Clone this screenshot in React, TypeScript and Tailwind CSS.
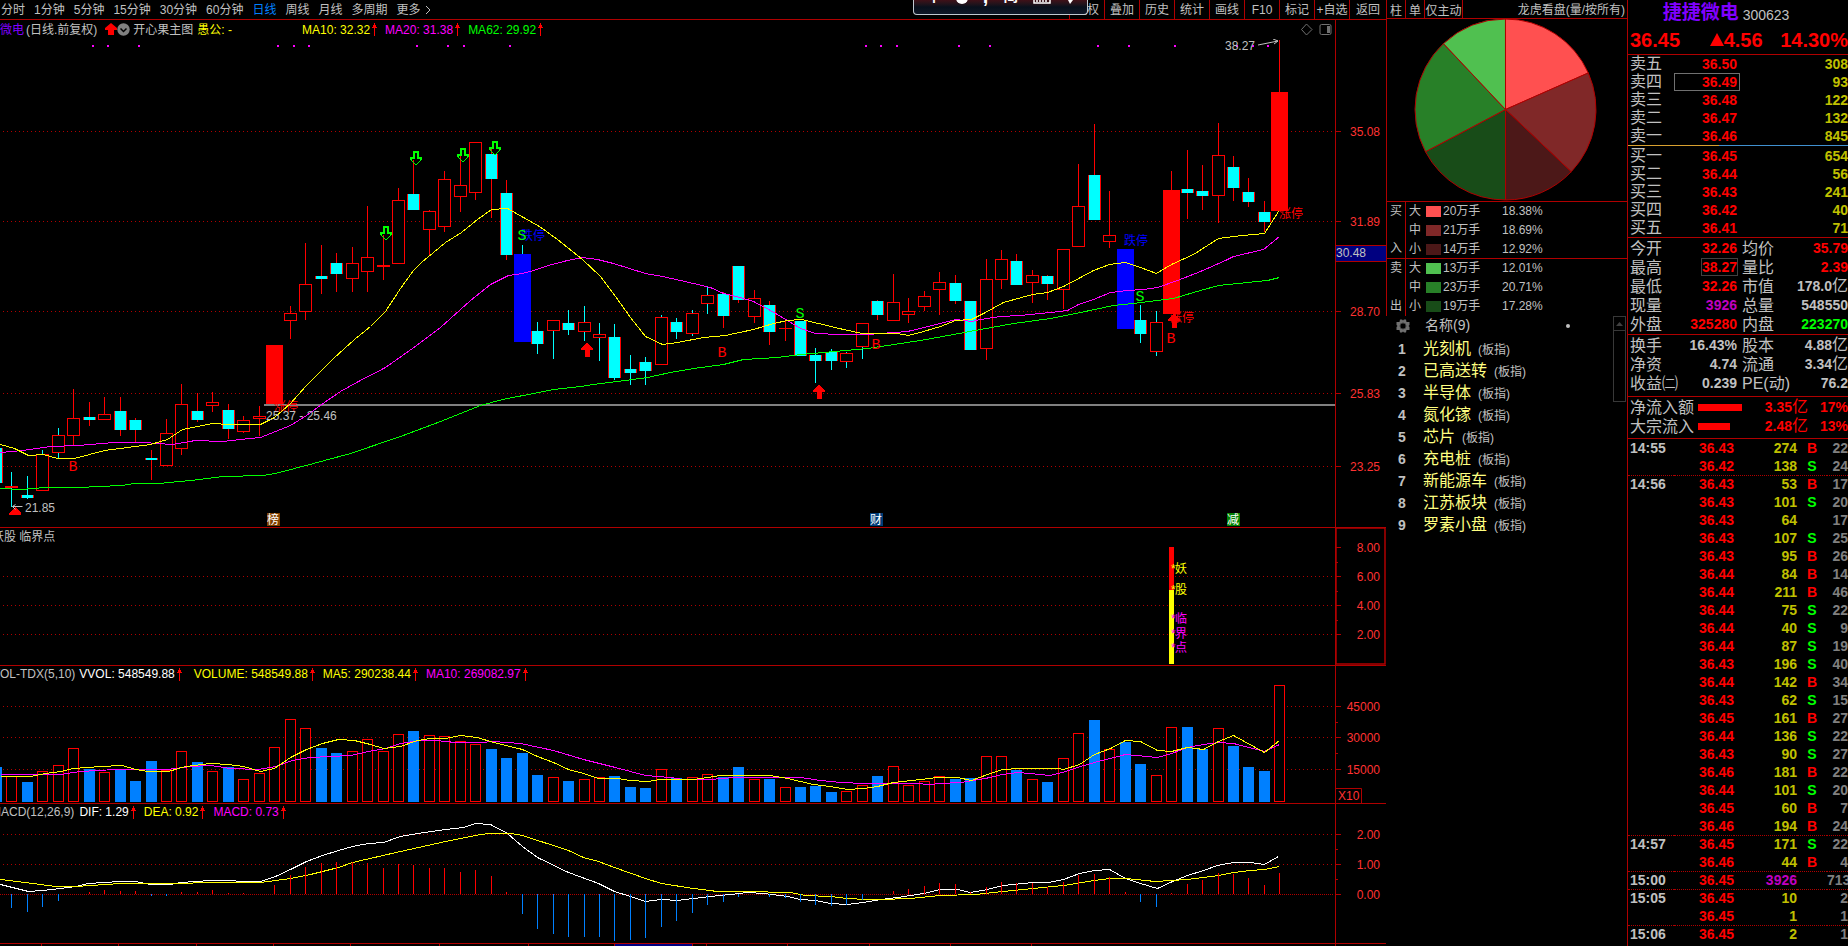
import React from "react";

type Kind = "r" | "c" | "R" | "B" | "d";
type Candle = [number, Kind, number, number, number, number, boolean?];

const cx = (i: number) => Math.round(11.4 + 15.463 * i);

/* index, kind, body top, body bottom, high, low, cyan wick */
const candles: Candle[] = [
  [-1, "c", 448, 483, 448, 483], [0, "d", 486, 488, 472, 507, true], [1, "c", 495, 498, 476, 499, true],
  [2, "r", 454, 491, 450, 491, true], [3, "r", 435, 453, 428, 458, true], [4, "r", 418, 436, 389, 446],
  [5, "c", 417, 420, 402, 426], [6, "r", 414, 420, 397, 420], [7, "c", 411, 430, 397, 436],
  [8, "c", 420, 430, 418, 442], [9, "c", 458, 460, 450, 480], [10, "r", 433, 466, 419, 466],
  [11, "r", 404, 449, 384, 455], [12, "c", 411, 420, 393, 422], [13, "r", 402, 406, 392, 412],
  [14, "c", 410, 429, 404, 439], [15, "r", 420, 432, 416, 433], [16, "r", 416, 419, 406, 436],
  [17, "R", 345, 404, 345, 404], [18, "r", 313, 321, 306, 339], [19, "r", 284, 312, 243, 320],
  [20, "c", 276, 279, 245, 294], [21, "c", 263, 274, 253, 292], [22, "r", 263, 279, 247, 292],
  [23, "r", 257, 272, 206, 292], [24, "d", 265, 267, 235, 280], [25, "r", 200, 264, 188, 264],
  [26, "c", 194, 210, 160, 210], [27, "r", 211, 230, 210, 256], [28, "r", 179, 227, 171, 232],
  [29, "r", 185, 197, 156, 212], [30, "r", 142, 193, 142, 200], [31, "c", 154, 179, 149, 218],
  [32, "c", 193, 255, 180, 260], [33, "B", 254, 342, 245, 342, true], [34, "c", 331, 344, 322, 354, true],
  [35, "r", 320, 331, 320, 359, true], [36, "c", 323, 330, 310, 335, true], [37, "r", 322, 332, 306, 341, true],
  [38, "r", 334, 338, 323, 361, true], [39, "c", 337, 378, 324, 380, true], [40, "c", 369, 373, 355, 385, true],
  [41, "c", 362, 371, 357, 385, true], [42, "r", 317, 365, 315, 365, true], [43, "c", 322, 332, 318, 339, true],
  [44, "r", 313, 334, 310, 336, true], [45, "r", 295, 304, 287, 314, true], [46, "c", 294, 316, 292, 328],
  [47, "c", 266, 300, 266, 303], [48, "r", 298, 317, 290, 323], [49, "c", 305, 332, 301, 345],
  [50, "d", 328, 329, 320, 341], [51, "c", 321, 356, 321, 356], [52, "c", 355, 361, 348, 383, true],
  [53, "c", 352, 361, 349, 370, true], [54, "r", 353, 362, 352, 368, true], [55, "r", 323, 347, 323, 359, true],
  [56, "c", 301, 315, 300, 320], [57, "r", 302, 321, 274, 321], [58, "r", 311, 315, 298, 323],
  [59, "r", 296, 307, 291, 311], [60, "r", 282, 290, 272, 315], [61, "c", 283, 301, 275, 304],
  [62, "c", 301, 350, 301, 350], [63, "r", 279, 349, 259, 360], [64, "r", 259, 280, 250, 289],
  [65, "c", 261, 285, 254, 285], [66, "r", 275, 283, 270, 303], [67, "c", 276, 284, 275, 300],
  [68, "r", 249, 290, 249, 309], [69, "r", 206, 247, 164, 247], [70, "c", 175, 220, 124, 220],
  [71, "r", 235, 242, 191, 248], [72, "B", 249, 329, 249, 329], [73, "c", 320, 334, 305, 343, true],
  [74, "r", 322, 352, 311, 356, true], [75, "R", 190, 314, 171, 314], [76, "c", 189, 193, 150, 219],
  [77, "c", 191, 196, 165, 210], [78, "r", 155, 196, 123, 223], [79, "c", 167, 188, 156, 201],
  [80, "c", 192, 202, 178, 207], [81, "c", 212, 222, 201, 232], [82, "R", 92, 211, 40, 211],
];

/* bar tops from index -1; the letter marks rising (r) or falling (b) */
const volumes =
  "b767 r776 b782 r771 r765 r748 b769 r772 b769 b781 b761 r770 r751 b762 r771 b767 r779 r773 r747 r719 r728 b748 b753 r751 r739 r751 r734 b731 r735 r736 r741 r744 b749 b758 b753 b775 r777 b781 r779 r777 b776 b787 b788 r769 b778 r777 r774 b777 b767 r779 b779 r787 b787 b786 b792 r791 r785 b776 r766 r785 r781 r776 b779 b778 r756 r756 b770 r779 b782 r758 r733 b720 r749 b742 b764 r775 r727 b727 b749 r728 b746 b767 b771 r685".split(" ");

/* bar ends from index 0, zero line at 894 */
const macd = [
  908, 912, 907, 901, 894, 892, 890, 891, 891, 896, 896, 892, 892, 890, 893, 893, 894, 885, 875, 867, 863, 862, 862,
  863, 868, 864, 865, 868, 868, 872, 870, 876, 892, 914, 929, 934, 937, 937, 937, 941, 940, 938, 927, 921, 913, 905,
  902, 897, 894, 897, 898, 902, 905, 906, 905, 900, 894, 891, 889, 886, 883, 884, 892, 887, 882, 883, 883, 887, 882,
  875, 874, 877, 892, 902, 907, 893, 884, 880, 873, 874, 878, 885, 873,
];

const ma10 = "0,444 14,448 28,455 43,454 57,458 74,458 104,450 150,444 167,439 182,429 212,423 228,424 260,424 274,417 290,403 306,385 333,358 354,339 370,326 385,311 400,288 413,270 421,262 445,242 461,232 477,219 491,209 507,208 523,217 539,226 557,239 582,259 600,276 615,296 630,317 645,336 662,344 677,342 703,337 725,335 753,329 773,323 787,320 801,319 818,323 843,329 862,333 897,333 908,335 923,331 940,326 955,320 971,319 983,313 1003,302 1032,294 1047,292 1063,286 1080,277 1093,270 1109,264 1125,262 1140,267 1156,273 1171,264 1193,254 1207,245 1218,238 1242,235 1264,233 1278,211";
const ma20 = "0,452 22,450 50,446 78,445 114,442 143,442 172,444 195,440 222,441 240,439 260,437 275,431 290,425 306,415 324,402 340,391 358,381 385,367 412,348 440,327 470,300 490,284 508,275 522,273 533,270 548,265 567,260 582,257 597,259 613,263 645,273 662,276 680,280 693,283 710,287 723,293 740,297 753,301 770,310 787,320 800,328 815,333 840,334 867,334 880,333 907,331 940,323 955,319 971,321 980,319 1000,316 1020,315 1050,312 1067,310 1078,304 1093,299 1110,292 1127,290 1143,289 1157,287 1177,280 1200,271 1225,260 1233,256 1263,249 1279,236";
const ma62 = "0,488 20,489 45,487 80,487 97,486 122,485 133,483 158,483 190,480 223,476 262,475 275,473 313,463 350,453 400,436 440,421 480,405 502,399 533,393 553,389 580,386 600,383 617,381 647,377 670,372 693,368 723,364 743,359 777,357 800,354 823,352 867,348 900,343 920,340 953,334 980,329 1013,323 1050,318 1080,312 1113,305 1133,303 1157,300 1173,298 1193,292 1218,285 1247,282 1267,280 1279,277";
const vol5 = "0,776 30,776 45,773 60,771 73,768 100,766 122,765 135,769 148,771 168,771 185,766 210,763 228,764 243,766 260,771 274,768 290,757 306,749 322,743 338,739 354,740 370,744 383,748 400,746 417,740 430,738 445,738 460,735 477,737 493,742 522,749 537,756 553,762 568,769 583,773 598,778 617,778 630,780 647,781 660,779 693,779 707,777 720,775 770,775 787,778 800,781 813,784 830,786 847,789 863,788 877,786 893,782 920,779 937,777 957,777 971,780 987,774 1002,769 1020,768 1057,768 1063,769 1079,764 1094,754 1110,748 1125,740 1140,741 1157,750 1171,751 1187,747 1203,749 1218,741 1233,735 1264,752 1279,740";
const vol10 = "0,774 60,774 80,771 115,769 150,769 167,769 190,766 210,765 230,768 258,769 275,766 292,760 310,757 350,755 368,751 385,748 400,743 420,740 435,740 455,742 480,742 493,741 520,743 553,750 583,759 615,767 645,775 670,777 683,779 710,779 733,777 800,777 820,780 840,782 865,783 915,783 930,784 940,783 960,782 985,778 1002,774 1018,772 1050,775 1065,771 1080,766 1094,762 1125,754 1157,757 1171,753 1187,747 1203,744 1218,742 1233,743 1264,751 1279,744";
const dif = "0,884 28,891 42,890 60,888 75,886 88,883 120,881 135,881 150,884 170,884 180,882 210,880 260,881 275,876 290,869 306,861 322,855 338,850 352,846 368,843 383,842 400,836 417,833 445,829 463,827 475,823 490,824 507,833 522,846 537,857 568,872 598,883 614,891 630,896 645,901 661,899 677,900 693,898 710,896 730,894 747,892 763,893 787,896 800,899 815,900 830,903 847,904 863,902 880,899 897,897 923,893 940,889 957,889 970,892 987,889 1002,885 1033,882 1048,882 1063,879 1079,873 1094,870 1109,869 1125,878 1140,883 1157,888 1172,881 1187,875 1203,870 1217,865 1233,862 1250,862 1264,864 1278,856";
const dea = "0,879 25,882 40,884 55,886 75,886 90,885 120,883 170,883 215,882 260,882 290,878 310,874 338,867 352,862 400,851 445,841 480,834 490,833 510,833 522,835 568,850 583,857 598,861 614,867 645,878 661,883 693,888 717,891 745,891 790,892 805,895 830,896 847,898 865,899 880,899 910,898 940,895 975,894 1002,891 1033,888 1063,885 1094,880 1109,878 1125,878 1155,881 1187,879 1218,875 1233,872 1250,870 1264,869 1279,866";

const limitDots = [93, 108, 139, 278, 294, 309, 417, 448, 464, 510, 866, 881, 897, 959, 990, 1098, 1129, 1175, 1237, 1253, 1268];

function Grid({ ys }: { ys: number[] }) {
  return (
    <g stroke="#b00000" strokeDasharray="1 3" shapeRendering="crispEdges">
      {ys.map((y) => (
        <line key={y} x1="3" x2="1334" y1={y + 0.5} y2={y + 0.5} />
      ))}
    </g>
  );
}

function Line({ pts, color }: { pts: string; color: string }) {
  return <polyline points={pts} fill="none" stroke={color} strokeWidth="1" shapeRendering="crispEdges" transform="translate(0.5 0.5)" />;
}

function CandleMark({ c }: { c: Candle }) {
  const [i, kind, top, bottom, high, low, cyanWick] = c;
  const x = cx(i);
  const h = bottom - top;
  const wick = cyanWick ? "#00ffff" : "#ff0000";
  const wide = kind === "R" || kind === "B";
  return (
    <g>
      <rect x={x} y={high} width="1" height={low - high} fill={wick} />
      {wide && <rect x={x - 8} y={top} width="17" height={h} fill={kind === "R" ? "#ff0000" : "#0000ff"} />}
      {kind === "d" && <rect x={x - 6} y={top} width="13" height={h} fill="#ff0000" />}
      {kind === "r" && <rect x={x - 5.5} y={top + 0.5} width="12" height={h - 1} fill="#000" stroke="#ff0000" />}
      {kind === "c" && <rect x={x - 6} y={top} width="13" height={h} fill="#ff0000" />}
      {kind === "c" && <rect x={x - 5} y={top} width="11" height={h} fill="#00ffff" />}
    </g>
  );
}

function Arrow() {
  return (
    <svg width="5" height="13" viewBox="0 0 5 13" className="ml-0.5 shrink-0" shapeRendering="crispEdges" aria-hidden="true">
      <path d="M2 0h1v13h-1z M1 2h3v2h1v1H0V4h1z" fill="#ff0000" />
    </svg>
  );
}

const downArrow = (x: number, y: number) => (
  <path key={x} d={`M${x - 2} ${y}h4v6h3v2l-5 5l-5 -5v-2h3z`} fill="none" stroke="#00ff00" strokeWidth="1.4" />
);
const upArrow = (x: number, y: number) => (
  <path key={x} d={`M${x} ${y}l6 5v2h-3v7h-5v-7h-4v-2z`} fill="#ff0000" />
);

function Axis({ y, height, labels, minor, children }: { y: number; height: number; labels: [number, string][]; minor?: number[]; children?: React.ReactNode }) {
  return (
    <svg width="51" height={height} viewBox={`1335 ${y} 51 ${height}`} className="shrink-0 text-xs" aria-hidden="true">
      <g fill="#b00000">
        <rect x="1335" y={y} width="1" height={height} />
        {labels.map(([ty]) => <rect key={ty} x="1336" y={ty} width="5" height="1" />)}
        {minor?.map((ty) => <rect key={ty} x="1336" y={ty} width="2" height="1" />)}
      </g>
      {labels.map(([ty, t]) => (
        <text key={t} x="1380" y={ty + 5} textAnchor="end" fill="#ff3232">{t}</text>
      ))}
      {children}
    </svg>
  );
}

const periods = ["分时", "1分钟", "5分钟", "15分钟", "30分钟", "60分钟", "日线", "周线", "月线", "多周期"];
const tools = ["复权", "叠加", "历史", "统计", "画线", "F10", "标记", "+自选", "返回"];

function Toolbar() {
  return (
    <header className="flex h-5 shrink-0 items-center justify-between border-b border-[#b00000]">
      <nav className="flex shrink-0 gap-[9px] pl-px" aria-label="周期">
        {periods.map((p) => (
          <button key={p} className={p === "日线" ? "text-[#0080ff]" : "text-[#c0c0c0]"}>{p}</button>
        ))}
        <button className="flex items-center gap-1">
          更多
          <svg width="6" height="10" viewBox="0 0 6 10" fill="none" stroke="#c0c0c0" aria-hidden="true"><path d="M1 1l4 4l-4 4" /></svg>
        </button>
      </nav>
      <div className="flex h-full shrink-0">
        {tools.map((t) => (
          <button key={t} className="w-[35px] whitespace-nowrap border-l border-[#b00000] text-center last:w-[37px]">{t}</button>
        ))}
      </div>
    </header>
  );
}

function InputMethodBar() {
  return (
    <div className="absolute top-0 left-[913px] flex h-[15px] w-[175px] justify-between overflow-hidden rounded-b border border-t-0 border-[#c0c8d0] bg-gradient-to-b from-[#401018] via-[#08101c] to-[#101828] px-[13px] text-white">
      <span className="-mt-3 text-[14px] leading-4 font-bold">中</span>
      <span className="-mt-2 size-3 rounded-full bg-white" />
      <span className="-mt-3 text-[20px] leading-4 font-bold">,</span>
      <span className="-mt-3 text-[15px] leading-4 font-bold">简</span>
      <svg width="18" height="4" viewBox="0 0 18 4" aria-hidden="true"><path d="M1 0v3h16V0M4 0v2M7 0v2M10 0v2M13 0v2" stroke="#fff" fill="none" strokeWidth="1.5" /></svg>
      <svg width="8" height="5" viewBox="0 0 8 5" aria-hidden="true"><path d="M2 0l2 4l3 -4z" fill="#fff" /></svg>
    </div>
  );
}

function PricePanel() {
  return (
    <section className="flex border-b border-[#b00000]">
      <div className="flex min-w-0 flex-1 flex-col items-end overflow-hidden">
        <div className="flex h-[19px] w-full items-center pr-0.5 whitespace-nowrap">
          <span className="text-[#8000ff]">微电</span>
          <span className="ml-0.5">(日线.前复权)</span>
          <svg width="25" height="13" viewBox="0 0 25 13" className="mr-[3px] ml-2 shrink-0" aria-hidden="true">
            <path d="M6 0l6 5v2H9v5H3V7H0V5z" fill="#ff0000" />
            <circle cx="18.500" cy="6.500" r="6.200" fill="#808080" />
            <path d="M15.500 5.500l3 3l3 -3" fill="none" stroke="#000" strokeWidth="1.500" />
          </svg>
          <span>开心果主图</span>
          <span className="ml-1 text-[#ffff00]">愚公: -</span>
          <span className="ml-[70px] text-[#ffff00]">MA10: 32.32</span>
          <Arrow />
          <span className="ml-2 text-[#ff00ff]">MA20: 31.38</span>
          <Arrow />
          <span className="ml-2 text-[#00ff00]">MA62: 29.92</span>
          <Arrow />
          <svg width="32" height="13" viewBox="0 0 32 13" className="ml-auto shrink-0" fill="none" stroke="#707070" aria-hidden="true">
            <path d="M5.500 1l5.500 5.500l-5.500 5.500l-5 -5.500z" />
            <rect x="19" y="1.500" width="11" height="10" rx="1.500" />
            <rect x="26" y="3" width="3" height="7" fill="#707070" stroke="none" />
          </svg>
        </div>
        <svg width="1335" height="488" viewBox="0 39 1335 488" className="shrink-0 text-xs" role="img" aria-label="日线K线图">
          <Grid ys={[131, 221, 311, 393, 466]} />
          <g fill="#ff00ff">{limitDots.map((x) => <rect key={x} x={x - 1} y="45" width="2" height="2" />)}</g>
          <rect x="264" y="404" width="1071" height="2" fill="#808080" />
          <g shapeRendering="crispEdges">{candles.map((c) => <CandleMark key={c[0]} c={c} />)}</g>
          <g fill="#ff0000">
            <text x="274" y="411">涨停</text>
            <text x="1170" y="322">涨停</text>
            <text x="1279" y="218">涨停</text>
          </g>
          <g fill="#0000ff">
            <text x="521" y="240">跌停</text>
            <text x="1124" y="245">跌停</text>
          </g>
          <Line pts={ma62} color="#00ff00" />
          <Line pts={ma20} color="#ff00ff" />
          <Line pts={ma10} color="#ffff00" />
          <g shapeRendering="crispEdges">
            {downArrow(386, 227)}{downArrow(416, 152)}{downArrow(463, 149)}{downArrow(495, 142)}
            {upArrow(587, 343)}{upArrow(819, 385)}{upArrow(1174, 314)}
            <path d="M15 507l6 6v2H9v-2z" fill="#ff0000" />
          </g>
          <g className="text-[15px]" style={{ fontFamily: "'Liberation Mono', monospace" }} fill="#ff0000" textAnchor="middle">
            <text x="73" y="471">B</text><text x="722" y="357">B</text><text x="876" y="349">B</text><text x="1171" y="343">B</text>
          </g>
          <g className="text-[15px]" style={{ fontFamily: "'Liberation Mono', monospace" }} fill="#00ff00" textAnchor="middle">
            <text x="522" y="240">S</text><text x="800" y="318">S</text><text x="1140" y="301">S</text>
          </g>
          <g fill="#c0c0c0">
            <text x="266" y="420">25.37 - 25.46</text>
            <text x="25" y="512">21.85</text>
            <text x="1225" y="50">38.27</text>
            <path d="M12.500 506.500h10M12.500 506.500l3 -2M12.500 506.500l3 3M1258 45l20 -4M1273 39l5 2l-4 3" stroke="#c0c0c0" fill="none" />
          </g>
          <rect x="267" y="513" width="13" height="13" fill="#804000" />
          <rect x="870" y="513" width="13" height="13" fill="#003c78" />
          <rect x="1227" y="513" width="13" height="13" fill="#008000" />
          <g fill="#ffffff">
            <text x="267" y="524">榜</text><text x="870" y="524">财</text><text x="1227" y="524">减</text>
          </g>
        </svg>
      </div>
      <Axis y={20} height={507} labels={[[131, "35.08"], [221, "31.89"], [311, "28.70"], [393, "25.83"], [466, "23.25"]]}>
        <rect x="1336" y="245" width="50" height="17" fill="#b00000" />
        <rect x="1336" y="246" width="50" height="15" fill="#000080" />
        <text x="1336" y="257" fill="#c0c0c0">30.48</text>
      </Axis>
    </section>
  );
}

function SignalPanel() {
  const marks: [string, number, string][] = [["妖", 569, "#ffff00"], ["股", 590, "#ffff00"], ["临", 619, "#ff00ff"], ["界", 634, "#ff00ff"], ["点", 648, "#ff00ff"]];
  return (
    <section className="flex border-b border-[#b00000]">
      <div className="flex min-w-0 flex-1 flex-col items-end overflow-hidden">
        <div className="-ml-2 flex h-[18px] w-full items-center self-start whitespace-nowrap">妖股 临界点</div>
        <svg width="1335" height="119" viewBox="0 546 1335 119" className="shrink-0 text-xs" role="img" aria-label="妖股临界点">
          <Grid ys={[576, 605, 634]} />
          <rect x="1169" y="547" width="5" height="43" fill="#ff0000" />
          <rect x="1169" y="590" width="5" height="74" fill="#ffff00" />
          {marks.map(([t, y, color]) => (
            <g key={t} fill={color}>
              <text x="1171" y={y + 4}>*</text>
              <text x="1175" y={y + 4}>{t}</text>
            </g>
          ))}
        </svg>
      </div>
      <Axis y={528} height={137} labels={[[547, "8.00"], [576, "6.00"], [605, "4.00"], [634, "2.00"]]} minor={[562, 591, 620]}>
        <path d="M1336 528v136h49v-136z" fill="none" stroke="#b00000" strokeWidth="1.500" />
      </Axis>
    </section>
  );
}

function VolumePanel() {
  return (
    <section className="flex border-b border-[#b00000]">
      <div className="flex min-w-0 flex-1 flex-col items-end overflow-hidden">
        <div className="-ml-2 flex h-4 w-full items-center self-start whitespace-nowrap">
          <span>VOL-TDX(5,10)</span>
          <span className="ml-1 text-white">VVOL: 548549.88</span><Arrow />
          <span className="ml-3 text-[#ffff00]">VOLUME: 548549.88</span><Arrow />
          <span className="ml-2 text-[#ffff00]">MA5: 290238.44</span><Arrow />
          <span className="ml-2 text-[#ff00ff]">MA10: 269082.97</span><Arrow />
        </div>
        <svg width="1335" height="121" viewBox="0 682 1335 121" className="shrink-0" role="img" aria-label="成交量">
          <Grid ys={[706, 737, 769]} />
          <g shapeRendering="crispEdges">
            {volumes.map((v, n) => {
              const x = cx(n - 1);
              const top = Number(v.slice(1));
              return v[0] === "b"
                ? <rect key={n} x={x - 5} y={top} width="11" height={802 - top} fill="#0080ff" />
                : <rect key={n} x={x - 4.5} y={top + 0.5} width="10" height={801 - top} fill="#000" stroke="#ff0000" />;
            })}
          </g>
          <Line pts={vol10} color="#ff00ff" />
          <Line pts={vol5} color="#ffff00" />
        </svg>
      </div>
      <Axis y={666} height={137} labels={[[706, "45000"], [737, "30000"], [769, "15000"]]} minor={[722, 753]}>
        <path d="M1336 788.500h25.500v15" fill="none" stroke="#b00000" />
        <text x="1338" y="800" fill="#ff3232">X10</text>
      </Axis>
    </section>
  );
}

function MacdPanel() {
  return (
    <section className="flex border-b border-[#b00000]">
      <div className="flex min-w-0 flex-1 flex-col items-end overflow-hidden">
        <div className="-ml-[9px] flex h-4 w-full items-center self-start whitespace-nowrap">
          <span>MACD(12,26,9)</span>
          <span className="ml-[5px] text-white">DIF: 1.29</span><Arrow />
          <span className="ml-2 text-[#ffff00]">DEA: 0.92</span><Arrow />
          <span className="ml-2 text-[#ff00ff]">MACD: 0.73</span><Arrow />
        </div>
        <svg width="1335" height="123" viewBox="0 820 1335 123" className="shrink-0" role="img" aria-label="MACD">
          <Grid ys={[834, 864]} />
          <line x1="0" x2="1334" y1="894.5" y2="894.5" stroke="#b00000" strokeDasharray="1 1" shapeRendering="crispEdges" />
          <Line pts={dif} color="#ffffff" />
          <Line pts={dea} color="#ffff00" />
          {macd.map((v, i) => (
            <rect key={i} x={cx(i)} y={Math.min(v, 894)} width="1" height={Math.abs(v - 894)} fill={v < 894 ? "#ff0000" : "#0080ff"} />
          ))}
        </svg>
      </div>
      <Axis y={804} height={139} labels={[[834, "2.00"], [864, "1.00"], [894, "0.00"]]} minor={[849, 879]} />
    </section>
  );
}

function TimeStrip() {
  return (
    <div className="flex justify-end overflow-hidden">
      <svg width="1386" height="2" viewBox="0 944 1386 2" className="shrink-0" aria-hidden="true">
        <rect x="615" y="944" width="77" height="2" fill="#000080" />
        <g fill="#b00000">
          {[41, 118, 196, 273, 350, 439, 528, 614, 692, 706, 787, 869, 950, 1031, 1335].map((x) => <rect key={x} x={x} y="944" width="1" height="2" />)}
        </g>
      </svg>
    </div>
  );
}

const slices: [number, string][] = [[18.38, "#ff5050"], [18.69, "#802828"], [12.92, "#4c1818"], [17.28, "#184c18"], [20.71, "#288028"], [12.01, "#50c050"]];

function Pie() {
  let acc = 0;
  const at = (p: number) => {
    const a = (p / 100) * Math.PI * 2;
    return `${(118.5 + 90.5 * Math.sin(a)).toFixed(2)} ${(90.5 - 90.5 * Math.cos(a)).toFixed(2)}`;
  };
  return (
    <svg width="240" height="182" viewBox="0 0 240 182" className="mx-auto" role="img" aria-label="龙虎看盘">
      {slices.map(([v, color]) => {
        const from = acc;
        acc += v;
        return <path key={color} d={`M118.500 90.500L${at(from)}A90.500 90.500 0 0 1 ${at(acc)}Z`} fill={color} stroke="#b00000" />;
      })}
    </svg>
  );
}

type Flow = [string, string, string, string];
const buys: Flow[] = [["大", "bg-[#ff5050]", "20万手", "18.38%"], ["中", "bg-[#802828]", "21万手", "18.69%"], ["小", "bg-[#4c1818]", "14万手", "12.92%"]];
const sells: Flow[] = [["大", "bg-[#50c050]", "13万手", "12.01%"], ["中", "bg-[#288028]", "23万手", "20.71%"], ["小", "bg-[#184c18]", "19万手", "17.28%"]];

function FlowGroup({ side, rows }: { side: [string, string]; rows: Flow[] }) {
  return (
    <div className="flex h-[57px] border-b border-[#b00000] last:border-b-0">
      <div className="flex w-[19px] flex-col justify-between border-r border-[#b00000] text-center leading-[19px]">
        <span>{side[0]}</span>
        <span>{side[1]}</span>
      </div>
      <div className="flex-1">
        {rows.map(([size, swatch, amount, pct]) => (
          <div key={size} className="flex h-[19px] items-center leading-[19px]">
            <span className="ml-[3px] w-[17px]">{size}</span>
            <span className={`mr-0.5 h-[11px] w-[15px] ${swatch}`} />
            <span className="w-[59px]">{amount}</span>
            <span>{pct}</span>
          </div>
        ))}
      </div>
    </div>
  );
}

const sectors = ["光刻机", "已高送转", "半导体", "氮化镓", "芯片", "充电桩", "新能源车", "江苏板块", "罗素小盘"];

function MiddleColumn() {
  return (
    <aside className="w-[241px] shrink-0">
      <div className="border-l border-[#b00000]">
        <div className="flex h-[19px] items-stretch border-b border-[#b00000] leading-[18px]">
          <button className="w-[19px] border-r border-[#b00000] pt-0.5 text-center">柱</button>
          <button className="w-[19px] border-r border-[#b00000] pt-0.5 text-center">单</button>
          <button className="w-[38px] border-r border-[#b00000] pt-0.5 text-center whitespace-nowrap">仅主动</button>
          <h2 className="ml-auto pt-px pr-0.5">龙虎看盘(量/按所有)</h2>
        </div>
        <Pie />
        <div className="border-t border-[#b00000]">
          <FlowGroup side={["买", "入"]} rows={buys} />
          <FlowGroup side={["卖", "出"]} rows={sells} />
        </div>
      </div>
      <div className="flex">
        <div className="flex-1">
          <div className="flex h-[19px] items-center text-sm leading-[19px]">
            <svg width="14" height="14" viewBox="0 0 14 14" className="mr-[15px] ml-2.5" aria-hidden="true">
              <path d="M4 0.500h2l1 1l1 -1h2l0.500 2.500h3v3l-1 1l1 1v3h-3l-0.500 2.500h-2l-1 -1l-1 1h-2l-0.500 -2.500h-3v-3l1 -1l-1 -1v-3h3z" fill="#707070" />
              <circle cx="7" cy="7" r="3" fill="#000" stroke="#404040" />
            </svg>
            <span>名称(9)</span>
            <span className="ml-24 size-1 rounded-full bg-[#c0c0c0]" />
          </div>
          <ol className="pt-[3px]">
            {sectors.map((s, i) => (
              <li key={s} className="flex h-[22px] items-baseline leading-[22px]">
                <span className="ml-3 w-[25px] text-sm leading-[22px] font-bold">{i + 1}</span>
                <span className="text-base leading-[22px] text-[#ffff80]">{s}</span>
                <span className="ml-[7px]">(板指)</span>
              </li>
            ))}
          </ol>
        </div>
        <div className="mr-px h-[86px] w-[13px] border border-[#383838]">
          <div className="flex h-[14px] items-center justify-center border-b border-[#383838]">
            <svg width="7" height="4" viewBox="0 0 7 4" aria-hidden="true"><path d="M3.500 0L7 4H0z" fill="#404040" /></svg>
          </div>
        </div>
      </div>
    </aside>
  );
}

const asks: [string, string, string][] = [["卖五", "36.50", "308"], ["卖四", "36.49", "93"], ["卖三", "36.48", "122"], ["卖二", "36.47", "132"], ["卖一", "36.46", "845"]];
const bids: [string, string, string][] = [["买一", "36.45", "654"], ["买二", "36.44", "56"], ["买三", "36.43", "241"], ["买四", "36.42", "40"], ["买五", "36.41", "71"]];

function Book({ rows }: { rows: [string, string, string][] }) {
  return (
    <table className="w-full table-fixed border-separate border-spacing-0 leading-[18px]">
      <tbody>
        {rows.map(([label, price, vol]) => (
          <tr key={label} className="h-[18px]">
            <th className="w-[46px] p-0 pl-0.5 text-left text-base leading-[18px] font-normal">{label}</th>
            <td className={label === "卖四" ? "w-[66px] border border-[#707070] p-0 pr-0.5 text-right text-sm leading-4 font-bold text-[#ff0000]" : "w-[66px] p-0 pr-[3px] text-right text-sm leading-[18px] font-bold text-[#ff0000]"}>{price}</td>
            <td className="p-0 text-right text-sm leading-[18px] font-bold text-[#c0c000]">{vol}</td>
          </tr>
        ))}
      </tbody>
    </table>
  );
}

type Stat = [string, string, string, string, string, string];
const red = "text-[#ff0000]";
const gray = "text-[#c0c0c0]";
const statsA: Stat[] = [
  ["今开", "32.26", red, "均价", "35.79", red],
  ["最高", "38.27", red, "量比", "2.39", red],
  ["最低", "32.26", red, "市值", "178.0亿", gray],
  ["现量", "3926", "text-[#c000c0]", "总量", "548550", gray],
  ["外盘", "325280", red, "内盘", "223270", "text-[#00ff00]"],
];
const statsB: Stat[] = [
  ["换手", "16.43%", gray, "股本", "4.88亿", gray],
  ["净资", "4.74", gray, "流通", "3.34亿", gray],
  ["收益㈡", "0.239", gray, "PE(动)", "76.2", gray],
];

function Num({ value }: { value: string }) {
  const unit = value.endsWith("亿");
  return (
    <>
      <span className="font-bold">{unit ? value.slice(0, -1) : value}</span>
      {unit && <span className="text-base leading-[14px]">亿</span>}
    </>
  );
}

function Stats({ rows }: { rows: Stat[] }) {
  return (
    <div>
      {rows.map(([l1, v1, c1, l2, v2, c2]) => (
        <dl key={l1} className="flex h-[19px] text-sm leading-[19px] whitespace-nowrap">
          <dt className="w-[50px] pl-0.5 text-base leading-[19px]">{l1}</dt>
          <dd className={`w-[59px] text-right ${c1}`}>
            {v1 === "38.27" ? <span className="font-bold outline outline-[#404040]">{v1}</span> : <Num value={v1} />}
          </dd>
          <dt className="pl-[5px] text-base leading-[19px]">{l2}</dt>
          <dd className={`flex-1 text-right ${c2}`}><Num value={v2} /></dd>
        </dl>
      ))}
    </div>
  );
}

const ticks: [string, string, number, string, number][] = [
  ["14:55", "36.43", 274, "B", 22], ["", "36.42", 138, "S", 24], ["14:56", "36.43", 53, "B", 17], ["", "36.43", 101, "S", 20],
  ["", "36.43", 64, "", 17], ["", "36.43", 107, "S", 25], ["", "36.43", 95, "B", 26], ["", "36.44", 84, "B", 14],
  ["", "36.44", 211, "B", 46], ["", "36.44", 75, "S", 22], ["", "36.44", 40, "S", 9], ["", "36.44", 87, "S", 19],
  ["", "36.43", 196, "S", 40], ["", "36.44", 142, "B", 34], ["", "36.43", 62, "S", 15], ["", "36.45", 161, "B", 27],
  ["", "36.44", 136, "S", 22], ["", "36.43", 90, "S", 27], ["", "36.46", 181, "B", 22], ["", "36.44", 101, "S", 20],
  ["", "36.45", 60, "B", 7], ["", "36.46", 194, "B", 24], ["14:57", "36.45", 171, "S", 22], ["", "36.46", 44, "B", 4],
  ["15:00", "36.45", 3926, "", 713], ["15:05", "36.45", 10, "", 2], ["", "36.45", 1, "", 1], ["15:06", "36.45", 2, "", 1],
];

function Ticks() {
  return (
    <table className="w-full table-fixed border-separate border-spacing-0 text-sm font-bold">
      <tbody>
        {ticks.map(([time, price, vol, side, count], i) => {
          const edge = time && i > 0 ? "border-t border-dotted border-[#b00000] leading-[17px]" : "leading-[18px]";
          return (
            <tr key={i}>
              <td className={`w-[46px] p-0 pl-0.5 ${edge}`}>{time}</td>
              <td className={`w-[60px] p-0 text-right text-[#ff0000] ${edge}`}>{price}</td>
              <td className={`w-[63px] p-0 text-right ${vol > 3000 ? "text-[#c000c0]" : "text-[#c0c000]"} ${edge}`}>{vol}</td>
              <td className={`w-[30px] p-0 text-center ${side === "B" ? "text-[#ff0000]" : "text-[#00ff00]"} ${edge}`}>{side || "\u00a0"}</td>
              <td className={`p-0 text-right text-[#808080] ${edge}`}>{count}</td>
            </tr>
          );
        })}
      </tbody>
    </table>
  );
}

function QuoteColumn() {
  return (
    <aside className="w-[221px] shrink-0 overflow-hidden border-l border-[#b00000]">
      <div className="h-[55px] overflow-hidden border-b border-[#b00000]">
        <h1 className="flex h-[25px] items-center justify-center pr-6 whitespace-nowrap">
          <span className="text-[19px] font-bold text-[#8000ff]">捷捷微电</span>
          <span className="ml-1 pt-1 text-sm font-normal">300623</span>
        </h1>
        <p className="flex h-[29px] items-center justify-between pl-0.5 text-xl font-bold whitespace-nowrap text-[#ff0000]">
          <span>36.45</span>
          <span className="flex items-center pl-3">
            <svg width="14" height="13" viewBox="0 0 14 13" aria-hidden="true"><path d="M7 0l7 13H0z" fill="#ff0000" /></svg>
            4.56
          </span>
          <span>14.30%</span>
        </p>
      </div>
      <Book rows={asks} />
      <div className="flex h-px">
        <div className="w-[91px] bg-[#d8a030]" />
        <div className="flex-1 bg-[#4090d0]" />
      </div>
      <div className="border-b border-[#b00000] pt-px">
        <Book rows={bids} />
      </div>
      <div className="border-b border-[#b00000] pt-px">
        <Stats rows={statsA} />
      </div>
      <div className="border-b border-[#b00000] pt-px pb-[3px]">
        <Stats rows={statsB} />
      </div>
      <div className="border-b border-[#b00000] pt-px pb-0.5">
        {[["净流入额", "w-11", "3.35亿", "17%"], ["大宗流入", "w-8", "2.48亿", "13%"]].map(([label, bar, value, pct]) => (
          <div key={label} className="flex h-[19px] items-center pl-0.5 text-sm leading-[19px] text-[#ff0000]">
            <span className="w-[68px] text-base leading-[19px] text-[#c0c0c0]">{label}</span>
            <span className={`h-[7px] bg-[#ff0000] ${bar}`} />
            <span className="ml-auto"><Num value={value} /></span>
            <span className="w-10 text-right font-bold">{pct}</span>
          </div>
        ))}
      </div>
      <Ticks />
    </aside>
  );
}

export default function App() {
  return (
    <div
      className="relative flex min-h-screen overflow-hidden bg-black text-xs leading-4 text-[#c0c0c0]"
      style={{ fontFamily: "'Liberation Sans', 'Noto Sans CJK SC', sans-serif" }}
    >
      <main className="flex min-w-0 flex-1 flex-col">
        <Toolbar />
        <PricePanel />
        <SignalPanel />
        <VolumePanel />
        <MacdPanel />
        <TimeStrip />
      </main>
      <MiddleColumn />
      <QuoteColumn />
      <InputMethodBar />
    </div>
  );
}
